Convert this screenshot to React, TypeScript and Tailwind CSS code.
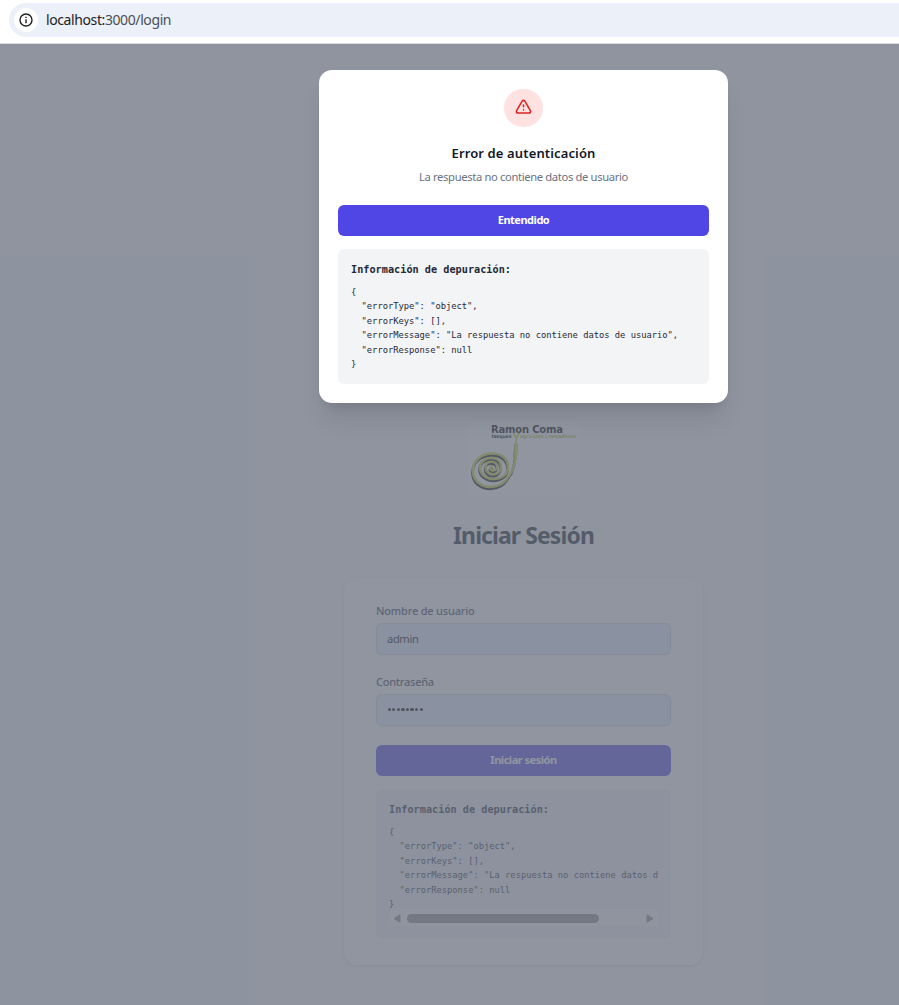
import React from "react";

const debugLines = [
  "{",
  '  "errorType": "object",',
  '  "errorKeys": [],',
  '  "errorMessage": "La respuesta no contiene datos de usuario",',
  '  "errorResponse": null',
  "}",
];

const spiral =
  "M47 28C47 40 44 51 40 56C36 63 31 67 22 67C11 67 4 60 4 51C4 41 12 33.500 23 33.500C33 33.500 39 39 39 47C39 54 33 59 25 59C17 59 11 54 11 47.500C11 42 16 38 22 38C28 38 32 41 32 46.500C32 51 29 54.500 24 54.500C20 54.500 16.500 51 16.500 47.500C16.500 44 19 41.800 22.500 41.800C26 41.800 28 44 28 46.500C28 49 26 50.500 23.500 50.500C21 50.500 20.500 47 23 46.500";

function DebugInfo({ scroll = false }: { scroll?: boolean }) {
  return (
    <div
      className={
        "rounded-[6px] bg-[#f3f4f6] px-[13px] pt-[14px] font-['DejaVu_Sans_Mono',monospace] text-[#1f2937] " +
        (scroll ? "h-[150px]" : "h-[135px]")
      }
    >
      <p className="h-[14px] whitespace-nowrap text-[10.2px] leading-[14px] font-bold tracking-[0.02px]">
        Información de depuración:
      </p>
      <pre
        className={
          "mt-[8px] font-['DejaVu_Sans_Mono',monospace] text-[8.800px] leading-[14.400px] tracking-[-0.02px] " +
          (scroll ? "overflow-hidden" : "")
        }
      >
        {debugLines.join("\n")}
      </pre>
      {scroll && (
        <div className="flex h-[15px] items-center justify-between bg-[#fcfcfc] px-1">
          <svg className="h-[9px] w-2 shrink-0" viewBox="0 0 8 9" fill="#8b8b8b" stroke="#8b8b8b" strokeLinejoin="round">
            <path d="M7 0.800V8.200L1 4.500z" />
          </svg>
          <div className="mr-auto ml-[6px] h-[9px] w-48 rounded-full bg-[#8b8b8b]" />
          <svg className="h-[9px] w-2 shrink-0" viewBox="0 0 8 9" fill="#8b8b8b" stroke="#8b8b8b" strokeLinejoin="round">
            <path d="M1 0.800V8.200L7 4.500z" />
          </svg>
        </div>
      )}
    </div>
  );
}

function Logo() {
  return (
    <svg className="h-[77px] w-[109px]" viewBox="0 0 109 77">
      <rect width="109" height="77" fill="#fff" />
      <g fill="none" strokeLinecap="round" strokeLinejoin="round">
        <path stroke="#111" strokeWidth="2.600" transform="translate(-0.5 1.900)" d={spiral} />
        <path stroke="#cdd43c" strokeWidth="2.600" d={spiral} />
        <path stroke="#555" strokeWidth="3.200" d="M46.800 25L46 36" />
        <path stroke="#cdd43c" strokeWidth="3.400" d="M47.300 24L46.800 36" />
        <path stroke="#cdd43c" strokeWidth="1.800" d="M47 22V19L45 14M47 19L50 13" />
      </g>
      <text x="22" y="13" textLength="72" fontFamily="DejaVu Sans" fontWeight="bold" fontSize="10" fill="#000">Ramon Coma</text>
      <text x="22.500" y="18.300" textLength="20" fontFamily="DejaVu Sans" fontWeight="bold" fontSize="4.800" fill="#000">tasques</text>
      <text x="51" y="18.300" textLength="56" fontFamily="DejaVu Sans" fontWeight="bold" fontSize="4.800" fill="#b3bf1e">agrícoles i ramaderes</text>
    </svg>
  );
}

function AddressBar() {
  return (
    <header className="flex h-11 shrink-0 items-start border-b border-[#d9dce0] bg-white pt-[3px] pl-[9px]">
      <div className="flex h-[34px] flex-1 items-center rounded-l-full bg-[#ebf0f9] pl-[5px]">
        <div className="flex size-6 items-center justify-center rounded-full bg-white">
          <svg className="size-[14px]" viewBox="0 0 14 14" fill="none" stroke="#202124" strokeWidth="1.400">
            <circle cx="7" cy="7" r="6" />
            <path d="M7 6.300v3.900M7 3.700v1.400" />
          </svg>
        </div>
        <p className="ml-2 text-[14px] leading-5 tracking-[-0.4px] text-[#4b4f55]">
          <span className="text-[#1f2023]">localhost:</span>3000/login
        </p>
      </div>
    </header>
  );
}

function LoginPage() {
  return (
    <div className="flex h-full flex-col items-center bg-[#f9fafb] pt-[376px]">
      <div className="flex flex-col items-center pl-[148px]">
        <Logo />
        <h1 className="mt-5 h-9 whitespace-nowrap text-[23px] leading-9 font-bold tracking-[-0.92px] text-[#111827]">
          Iniciar Sesión
        </h1>
        <form className="mt-[25px] flex h-[387px] w-[359px] flex-col rounded-[13px] bg-white px-8 pt-[25px] shadow-sm">
          <label className="h-4 text-[11px] leading-4 font-medium tracking-[-0.2px] text-[#374151]">Nombre de usuario</label>
          <div className="mt-1 flex h-8 shrink-0 items-center rounded-[6px] border border-[#d1d5db] bg-[#e8f0fe] px-[10px] text-[11.200px] tracking-[-0.4px] shadow-xs">
            admin
          </div>
          <label className="mt-[19px] h-4 text-[11px] leading-4 font-medium tracking-[-0.25px] text-[#374151]">Contraseña</label>
          <div className="mt-1 flex h-8 shrink-0 items-center gap-[1.300px] rounded-[6px] border border-[#d1d5db] bg-[#e8f0fe] px-[10.500px] pb-px shadow-xs">
            {Array.from({ length: 8 }, (_, i) => (
              <span key={i} className="size-[3.300px] rounded-full bg-black" />
            ))}
          </div>
          <button type="button" className="mt-[19px] h-[31px] shrink-0 rounded-[6px] bg-[#4f46e5] pb-[2px] text-[11px] leading-4 font-bold tracking-[-0.48px] text-white">
            Iniciar sesión
          </button>
          <div className="mt-[13px]">
            <DebugInfo scroll />
          </div>
        </form>
      </div>
    </div>
  );
}

function ErrorDialog() {
  return (
    <section className="flex h-[333px] w-[409px] flex-col items-center rounded-[13px] bg-white px-[19px] pt-[19px] shadow-xl">
      <div className="flex h-[38px] w-[39px] shrink-0 items-center justify-center rounded-full bg-[#fee2e2] pb-px">
        <svg className="size-[19px]" viewBox="0 0 24 24" fill="none" stroke="#dc2626" strokeWidth="2" strokeLinecap="round" strokeLinejoin="round">
          <path d="M12 9v2m0 4h.010m-6.938 4h13.856c1.540 0 2.502-1.667 1.732-3L13.732 4c-.770-1.333-2.694-1.333-3.464 0L3.340 16c-.770 1.333.192 3 1.732 3z" />
        </svg>
      </div>
      <h2 className="mt-4 h-5 whitespace-nowrap text-[13px] leading-5 font-semibold tracking-[0.13px] text-[#111827]">
        Error de autenticación
      </h2>
      <p className="mt-[6px] h-4 whitespace-nowrap text-[11.200px] leading-4 tracking-[-0.34px] text-[#6b7280]">
        La respuesta no contiene datos de usuario
      </p>
      <button type="button" className="mt-5 h-[31px] w-full shrink-0 rounded-[6px] bg-[#4f46e5] pb-[2px] text-[11px] leading-4 font-bold tracking-[-0.48px] text-white">
        Entendido
      </button>
      <div className="mt-[13px] w-full">
        <DebugInfo />
      </div>
    </section>
  );
}

export default function App() {
  return (
    <div className="flex h-[1005px] w-[899px] flex-col overflow-hidden font-['Noto_Sans',sans-serif]">
      <AddressBar />
      <main className="relative min-h-0 flex-1">
        <LoginPage />
        <div className="absolute inset-0 flex items-start justify-center bg-[#6b7280]/75 pt-[26px] pl-[148px]">
          <ErrorDialog />
        </div>
      </main>
    </div>
  );
}
